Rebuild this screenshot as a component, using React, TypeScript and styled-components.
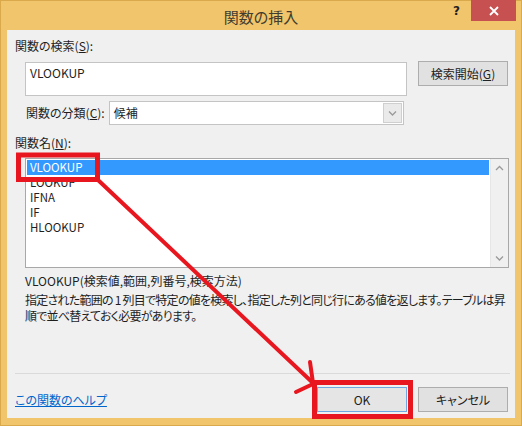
import styled, { createGlobalStyle } from "styled-components";

const GlobalStyle = createGlobalStyle`
  html, body {
    margin: 0;
    padding: 0;
    background: #ffffff;
  }
  body {
    font-family: "Noto Sans CJK JP", "Noto Sans", sans-serif;
    font-size: 12px;
    color: #1e1e1e;
    font-feature-settings: "palt";
  }
`;

const FUNCTIONS = ["VLOOKUP", "LOOKUP", "IFNA", "IF", "HLOOKUP"];

export default function App() {
  return (
    <>
      <GlobalStyle />
      <Window>
        <TitleBar>
          <Title>関数の挿入</Title>
          <HelpGlyph>?</HelpGlyph>
          <CloseButton aria-label="閉じる">
            <svg width="10" height="10" viewBox="0 0 10 10">
              <path d="M1 1 L9 9 M9 1 L1 9" stroke="#fff" strokeWidth="1.8" />
            </svg>
          </CloseButton>
        </TitleBar>

        <Client>
          <Label>
            関数の検索(<U>S</U>):
          </Label>
          <SearchRow>
            <SearchBox>VLOOKUP</SearchBox>
            <PushButton>
              検索開始(<U>G</U>)
            </PushButton>
          </SearchRow>

          <CategoryRow>
            <Label>
              関数の分類(<U>C</U>):
            </Label>
            <Select>
              <SelectText>候補</SelectText>
              <SelectArrow>
                <Chevron dir="down" />
              </SelectArrow>
            </Select>
          </CategoryRow>

          <ListLabel>
            関数名(<U>N</U>):
          </ListLabel>
          <ListBox>
            <ListItems>
              {FUNCTIONS.map((name, i) => (
                <ListItem key={name} $selected={i === 0}>
                  {name}
                </ListItem>
              ))}
            </ListItems>
            <ScrollBar>
              <Chevron dir="up" />
              <Chevron dir="down" />
            </ScrollBar>
          </ListBox>

          <Syntax>VLOOKUP(検索値,範囲,列番号,検索方法)</Syntax>
          <Description>
            <Line>指定された範囲の 1 列目で特定の値を検索し、指定した列と同じ行にある値を返します。テーブルは昇</Line>
            <Line>順で並べ替えておく必要があります。</Line>
          </Description>

          <Spacer />
          <Separator />

          <Footer>
            <HelpLink href="#">この関数のヘルプ</HelpLink>
            <ButtonGroup>
              <PushButton $default>OK</PushButton>
              <PushButton>キャンセル</PushButton>
            </ButtonGroup>
          </Footer>
        </Client>

        {/* red annotation drawn over the dialog */}
        <Annotation viewBox="0 0 522 426" width="522" height="426">
          <g stroke="#e8161f" fill="none" strokeLinecap="round">
            <rect x="18.5" y="155" width="79" height="24.5" strokeWidth="5" strokeLinecap="butt" />
            <rect x="314.5" y="382.5" width="96" height="34" strokeWidth="5" strokeLinecap="butt" />
            <line x1="98" y1="180" x2="313" y2="383" strokeWidth="4" />
            <line x1="310" y1="362" x2="313" y2="383" strokeWidth="4" />
            <line x1="296" y1="392" x2="313" y2="384" strokeWidth="4" />
          </g>
        </Annotation>
      </Window>
    </>
  );
}

function Chevron({ dir }: { dir: "up" | "down" }) {
  const d = dir === "up" ? "M1 5 L4.5 1.5 L8 5" : "M1 1.5 L4.5 5 L8 1.5";
  return (
    <svg width="9" height="7" viewBox="0 0 9 7">
      <path d={d} stroke="#9a9a9a" strokeWidth="1.3" fill="none" />
    </svg>
  );
}

const Window = styled.div`
  position: relative;
  width: 522px;
  height: 426px;
  box-sizing: border-box;
  background: #f0c56b;
  border: 1px solid #d9a94c;
  display: flex;
  flex-direction: column;
`;

const TitleBar = styled.div`
  position: relative;
  height: 29px;
  flex-shrink: 0;
  display: flex;
  align-items: center;
  justify-content: center;
`;

const Title = styled.div`
  font-size: 15px;
  color: #403c30;
  margin-top: 1px;
`;

const HelpGlyph = styled.span`
  position: absolute;
  left: 452px;
  top: 3px;
  font-family: "DejaVu Sans", sans-serif;
  font-weight: bold;
  font-size: 12px;
  color: #222;
`;

const CloseButton = styled.div`
  position: absolute;
  right: 5px;
  top: -1px;
  width: 45px;
  height: 21px;
  background: #c75050;
  display: flex;
  align-items: center;
  justify-content: center;
`;

const Client = styled.div`
  flex: 1;
  margin: 0 6px 7px 6px;
  background: #f0f0f0;
  padding: 8px 6px 6px 8px;
  display: flex;
  flex-direction: column;
  min-height: 0;
`;

const U = styled.span`
  text-decoration: underline;
`;

const Label = styled.div`
  line-height: 16px;
  white-space: nowrap;
`;

const SearchRow = styled.div`
  display: flex;
  align-items: flex-start;
  margin-top: 8px;
  margin-left: 10px;
`;

const SearchBox = styled.div`
  width: 382px;
  height: 34px;
  box-sizing: border-box;
  background: #fff;
  border: 1px solid #c4c4c4;
  padding: 2px 4px;
  line-height: 16px;
`;

const PushButton = styled.div<{ $default?: boolean }>`
  width: 90px;
  height: 25px;
  box-sizing: border-box;
  margin-left: 11px;
  margin-top: -1px;
  background: ${(p) => (p.$default ? "#e5e5e5" : "#e1e1e1")};
  border: 1px solid ${(p) => (p.$default ? "#6fa8e0" : "#adadad")};
  display: flex;
  align-items: center;
  justify-content: center;
  white-space: nowrap;
  color: #222;
`;

const CategoryRow = styled.div`
  display: flex;
  align-items: center;
  margin-top: 5px;
  margin-left: 11px;
  gap: 4px;
`;

const Select = styled.div`
  width: 295px;
  height: 24px;
  box-sizing: border-box;
  background: #fff;
  border: 1px solid #c4c4c4;
  display: flex;
  align-items: stretch;
`;

const SelectText = styled.div`
  flex: 1;
  padding-left: 4px;
  line-height: 22px;
`;

const SelectArrow = styled.div`
  width: 17px;
  margin: 1px;
  background: #eaeaea;
  border: 1px solid #cfcfcf;
  display: flex;
  align-items: center;
  justify-content: center;
`;

const ListLabel = styled(Label)`
  margin-top: 10px;
`;

const ListBox = styled.div`
  margin-top: 7px;
  margin-left: 10px;
  width: 484px;
  height: 110px;
  box-sizing: border-box;
  background: #fff;
  border: 1px solid #a8a8a8;
  display: flex;
`;

const ListItems = styled.div`
  flex: 1;
  padding: 1px;
`;

const ListItem = styled.div<{ $selected?: boolean }>`
  height: 15px;
  line-height: 15px;
  font-size: 11.5px;
  padding-left: 3px;
  background: ${(p) => (p.$selected ? "#3399ff" : "transparent")};
  color: ${(p) => (p.$selected ? "#ffffff" : "#1e1e1e")};
`;

const ScrollBar = styled.div`
  width: 17px;
  background: #f0f0f0;
  border-left: 1px solid #e6e6e6;
  display: flex;
  flex-direction: column;
  justify-content: space-between;
  align-items: center;
  padding: 6px 0 5px;
`;

const Syntax = styled.div`
  margin-top: 5px;
  margin-left: 10px;
  line-height: 16px;
  white-space: nowrap;
`;

const Description = styled.div`
  margin-top: 3px;
  margin-left: 10px;
  width: 482px;
  line-height: 16px;
  letter-spacing: -0.75px;
`;

const Line = styled.div`
  white-space: nowrap;
`;

const Spacer = styled.div`
  flex: 1;
`;

const Separator = styled.div`
  height: 1px;
  background: #dadada;
  margin-right: -1px;
`;

const Footer = styled.div`
  display: flex;
  align-items: center;
  justify-content: space-between;
  margin-top: 14px;
`;

const HelpLink = styled.a`
  color: #0066cc;
  text-decoration: underline;
  line-height: 16px;
`;

const ButtonGroup = styled.div`
  display: flex;
  margin-right: 1px;
`;

const Annotation = styled.svg`
  position: absolute;
  left: -1px;
  top: -1px;
  pointer-events: none;
`;
